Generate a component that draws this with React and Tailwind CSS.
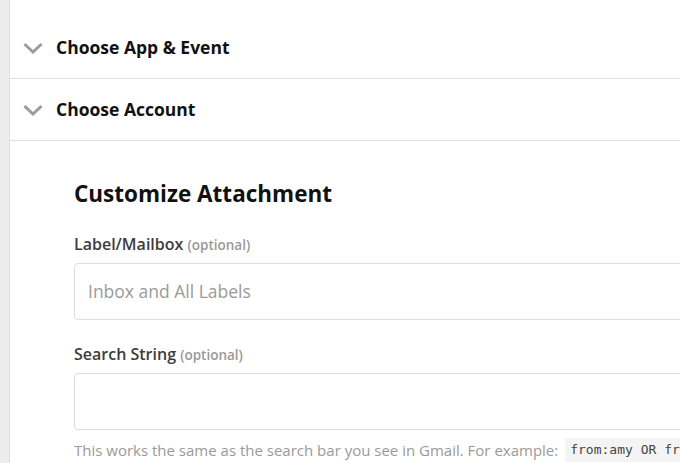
const Section = ({ title }) => (
  <div className="flex h-[62px] items-center border-b border-[#e0e0e0] pl-[13px]">
    <svg width="20" height="12" viewBox="0 0 20 12" className="mr-[13px]">
      <path d="M1.5 2 L10 10 L18.5 2" fill="none" stroke="#9b9b9b" strokeWidth="3" />
    </svg>
    <span className="text-[17.5px] font-bold text-[#111]">{title}</span>
  </div>
);

const Field = ({ label, placeholder, children }) => (
  <div className="mb-[23px]">
    <div className="mb-[7px] text-[16px] font-semibold leading-[22px] text-[#3d3c3b]">
      {label}{" "}
      <span className="text-[13.5px] font-semibold text-[#999]">(optional)</span>
    </div>
    <div className="flex h-[57px] items-center rounded-[4px] border border-[#dcdcdc] bg-white pl-[13px] text-[17.5px] text-[#9a9a9a]">
      {placeholder}
    </div>
    {children}
  </div>
);

export default function App() {
  return (
    <div
      className="flex h-[463px] w-[680px] overflow-hidden bg-white"
      style={{ fontFamily: '"Open Sans", sans-serif' }}
    >
      <div className="w-[10px] shrink-0 border-r border-[#dfe0e3] bg-[#ebecee]" />
      <div className="flex-1 min-w-0">
        <div className="h-[17px]" />
        <Section title="Choose App & Event" />
        <Section title="Choose Account" />
        <div className="pl-[64px] pt-[38px]">
          <h2 className="mb-[24px] text-[22.5px] font-bold leading-[30px] text-[#111]">
            Customize Attachment
          </h2>
          <div className="-mr-[80px]">
            <Field label="Label/Mailbox" placeholder="Inbox and All Labels" />
            <Field label="Search String" placeholder="">
              <div className="mt-[8px] flex items-center whitespace-nowrap text-[15px] text-[#9a9a9a]">
                This works the same as the search bar you see in Gmail. For example:
                <code
                  className="ml-[7px] rounded-[3px] bg-[#f4f4f4] px-[5px] py-[2px] text-[13px] text-[#444]"
                  style={{ fontFamily: '"DejaVu Sans Mono", monospace' }}
                >
                  from:amy OR from:david
                </code>
              </div>
            </Field>
          </div>
        </div>
      </div>
    </div>
  );
}
